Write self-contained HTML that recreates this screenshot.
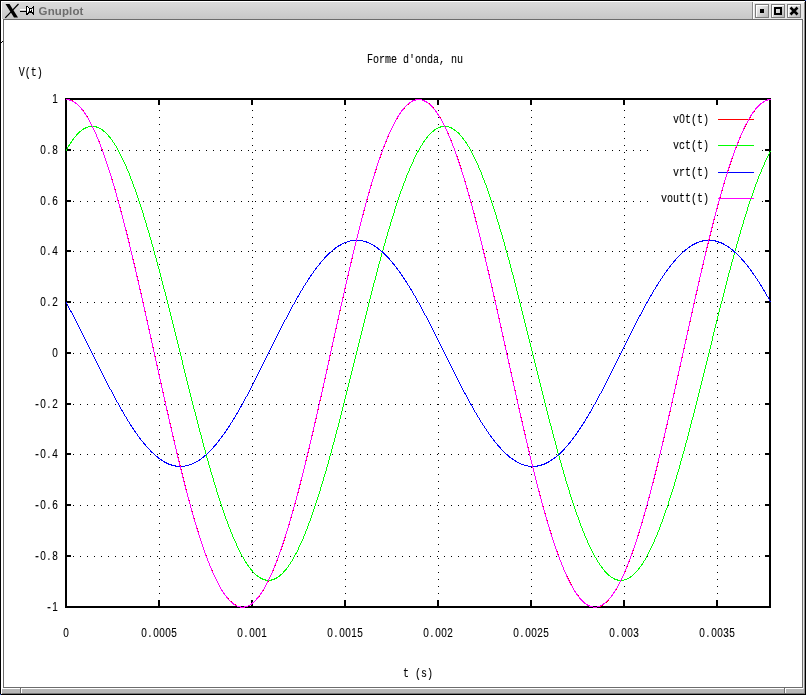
<!DOCTYPE html>
<html lang="it"><head><meta charset="utf-8"><title>Gnuplot</title>
<style>
html,body{margin:0;padding:0;background:#fff;width:806px;height:695px;overflow:hidden}
svg{display:block;position:absolute;left:0;top:0;will-change:transform}
.c{shape-rendering:crispEdges}
.m{font-family:"Liberation Mono","DejaVu Sans Mono",monospace;font-size:13px;fill:#000}
.d{font-family:"Liberation Sans","DejaVu Sans",sans-serif;font-size:13px}
.t{font-family:"Liberation Sans","DejaVu Sans",sans-serif;font-weight:bold;font-size:11.5px;letter-spacing:.12px;fill:#6d6d6d}
.ax{stroke:#000;stroke-width:2;fill:none}
.gr{stroke:#000;stroke-width:1;stroke-dasharray:1 6;fill:none}
.cv{fill:none;stroke-width:1}
</style></head><body>
<svg width="806" height="695" viewBox="0 0 806 695">
<defs><linearGradient id="tg" x1="0" y1="0" x2="0" y2="1"><stop offset="0" stop-color="#dbdbdb"/><stop offset="1" stop-color="#c8c8c8"/></linearGradient>
<linearGradient id="bg" x1="0" y1="0" x2="1" y2="1"><stop offset="0" stop-color="#f2f2f2"/><stop offset="1" stop-color="#b6b6b6"/></linearGradient></defs>
<g class="c">
<rect x="0" y="0" width="806" height="695" fill="#000"/>
<rect x="1" y="1" width="804" height="693" fill="#fff"/>
<rect x="803" y="20" width="1" height="669" fill="#e6e6e6"/>
<rect x="804" y="2" width="1" height="692" fill="#8a8a8a"/>
<rect x="2" y="693" width="803" height="1" fill="#7a7a7a"/>
<rect x="805" y="0" width="1" height="1" fill="#2a4fc0"/><rect x="0" y="694" width="1" height="1" fill="#2a4fc0"/>
<rect x="2" y="2" width="751" height="17" fill="url(#tg)"/>
<rect x="752" y="2" width="1" height="17" fill="#8a8a8a"/>
<rect x="753" y="2" width="51" height="17" fill="#e6e6e6"/>
<rect x="753" y="2" width="51" height="1" fill="#fff"/>
<rect x="753" y="2" width="1" height="17" fill="#fff"/>
<rect x="3" y="19" width="800" height="669" fill="#6c6c6c"/>
<rect x="4" y="20" width="798" height="667" fill="#fff"/>
<rect x="2" y="41" width="1" height="1" fill="#000"/><rect x="1" y="42" width="1" height="1" fill="#000"/>
<rect x="2" y="689" width="802" height="4" fill="#b8b8b8"/>
<rect x="20" y="688" width="1" height="6" fill="#6c6c6c"/>
<rect x="21" y="688" width="1" height="5" fill="#fff"/>
<rect x="784" y="688" width="1" height="6" fill="#6c6c6c"/>
<rect x="785" y="688" width="1" height="5" fill="#fff"/>
<rect x="755" y="4" width="14" height="14" fill="#7d7d7d"/>
<rect x="756" y="5" width="12" height="12" fill="#fff"/>
<rect x="757" y="6" width="11" height="11" fill="url(#bg)"/>
<rect x="771" y="4" width="14" height="14" fill="#7d7d7d"/>
<rect x="772" y="5" width="12" height="12" fill="#fff"/>
<rect x="773" y="6" width="11" height="11" fill="url(#bg)"/>
<rect x="787" y="4" width="14" height="14" fill="#7d7d7d"/>
<rect x="788" y="5" width="12" height="12" fill="#fff"/>
<rect x="789" y="6" width="11" height="11" fill="url(#bg)"/>
<rect x="760" y="9" width="4" height="4" fill="#000"/>
<rect x="775" y="8" width="6" height="6" fill="none" stroke="#000" stroke-width="2"/>
</g>
<path d="M790.5 7.5 L797.5 14.5 M797.5 7.5 L790.5 14.5" stroke="#000" stroke-width="2.6" fill="none"/>
<path d="M5.5 4 L9.5 4 L18 17.5 L14 17.5 Z" fill="#000"/>
<path d="M18.5 4 L5.3 17.8" stroke="#000" stroke-width="1.2" fill="none"/>
<g class="c"><rect x="20" y="9" width="6" height="1" fill="#fff"/><rect x="20" y="11" width="6" height="1" fill="#000"/><rect x="26" y="6" width="2" height="1" fill="#000"/><rect x="33" y="6" width="1" height="1" fill="#000"/><rect x="26" y="7" width="1" height="1" fill="#000"/><rect x="27" y="7" width="1" height="1" fill="#fff"/><rect x="28" y="7" width="1" height="1" fill="#000"/><rect x="32" y="7" width="2" height="1" fill="#000"/><rect x="26" y="8" width="1" height="1" fill="#000"/><rect x="27" y="8" width="2" height="1" fill="#fff"/><rect x="29" y="8" width="3" height="1" fill="#000"/><rect x="32" y="8" width="1" height="1" fill="#a8a8a8"/><rect x="33" y="8" width="1" height="1" fill="#000"/><rect x="26" y="9" width="1" height="1" fill="#000"/><rect x="27" y="9" width="2" height="1" fill="#fff"/><rect x="29" y="9" width="1" height="1" fill="#000"/><rect x="30" y="9" width="1" height="1" fill="#fff"/><rect x="31" y="9" width="1" height="1" fill="#a8a8a8"/><rect x="32" y="9" width="1" height="1" fill="#fff"/><rect x="33" y="9" width="1" height="1" fill="#000"/><rect x="26" y="10" width="1" height="1" fill="#000"/><rect x="27" y="10" width="2" height="1" fill="#fff"/><rect x="29" y="10" width="1" height="1" fill="#000"/><rect x="30" y="10" width="1" height="1" fill="#fff"/><rect x="31" y="10" width="1" height="1" fill="#000"/><rect x="32" y="10" width="1" height="1" fill="#fff"/><rect x="33" y="10" width="1" height="1" fill="#000"/><rect x="26" y="11" width="1" height="1" fill="#000"/><rect x="27" y="11" width="1" height="1" fill="#fff"/><rect x="28" y="11" width="1" height="1" fill="#a8a8a8"/><rect x="29" y="11" width="3" height="1" fill="#000"/><rect x="32" y="11" width="1" height="1" fill="#fff"/><rect x="33" y="11" width="1" height="1" fill="#000"/><rect x="26" y="12" width="1" height="1" fill="#000"/><rect x="27" y="12" width="1" height="1" fill="#fff"/><rect x="28" y="12" width="6" height="1" fill="#000"/><rect x="26" y="13" width="3" height="1" fill="#000"/><rect x="32" y="13" width="2" height="1" fill="#000"/><rect x="26" y="14" width="2" height="1" fill="#000"/><rect x="33" y="14" width="1" height="1" fill="#000"/></g>
<text class="t" x="38.6" y="15.3">Gnuplot</text>
<g class="c">
<line class="gr" x1="159.5" y1="608" x2="159.5" y2="99"/>
<line class="gr" x1="252.5" y1="608" x2="252.5" y2="99"/>
<line class="gr" x1="345.5" y1="608" x2="345.5" y2="99"/>
<line class="gr" x1="438.5" y1="608" x2="438.5" y2="99"/>
<line class="gr" x1="531.5" y1="608" x2="531.5" y2="99"/>
<line class="gr" x1="624.5" y1="608" x2="624.5" y2="99"/>
<line class="gr" x1="717.5" y1="608" x2="717.5" y2="99"/>
<line class="gr" x1="66" y1="150.5" x2="770" y2="150.5"/>
<line class="gr" x1="66" y1="201.5" x2="770" y2="201.5"/>
<line class="gr" x1="66" y1="251.5" x2="770" y2="251.5"/>
<line class="gr" x1="66" y1="302.5" x2="770" y2="302.5"/>
<line class="gr" x1="66" y1="353.5" x2="770" y2="353.5"/>
<line class="gr" x1="66" y1="404.5" x2="770" y2="404.5"/>
<line class="gr" x1="66" y1="454.5" x2="770" y2="454.5"/>
<line class="gr" x1="66" y1="505.5" x2="770" y2="505.5"/>
<line class="gr" x1="66" y1="556.5" x2="770" y2="556.5"/>
<rect x="648" y="100" width="114" height="112" fill="#fff"/>
<rect x="762" y="150" width="1" height="1" fill="#000"/>
<rect x="762" y="201" width="1" height="1" fill="#000"/>
<line class="ax" x1="159" y1="607" x2="159" y2="600"/>
<line class="ax" x1="159" y1="99" x2="159" y2="105"/>
<line class="ax" x1="252" y1="607" x2="252" y2="600"/>
<line class="ax" x1="252" y1="99" x2="252" y2="105"/>
<line class="ax" x1="345" y1="607" x2="345" y2="600"/>
<line class="ax" x1="345" y1="99" x2="345" y2="105"/>
<line class="ax" x1="438" y1="607" x2="438" y2="600"/>
<line class="ax" x1="438" y1="99" x2="438" y2="105"/>
<line class="ax" x1="531" y1="607" x2="531" y2="600"/>
<line class="ax" x1="531" y1="99" x2="531" y2="105"/>
<line class="ax" x1="624" y1="607" x2="624" y2="600"/>
<line class="ax" x1="624" y1="99" x2="624" y2="105"/>
<line class="ax" x1="717" y1="607" x2="717" y2="600"/>
<line class="ax" x1="717" y1="99" x2="717" y2="105"/>
<line class="ax" x1="66" y1="150" x2="71" y2="150"/>
<line class="ax" x1="770" y1="150" x2="765" y2="150"/>
<line class="ax" x1="66" y1="201" x2="71" y2="201"/>
<line class="ax" x1="770" y1="201" x2="765" y2="201"/>
<line class="ax" x1="66" y1="251" x2="71" y2="251"/>
<line class="ax" x1="770" y1="251" x2="765" y2="251"/>
<line class="ax" x1="66" y1="302" x2="71" y2="302"/>
<line class="ax" x1="770" y1="302" x2="765" y2="302"/>
<line class="ax" x1="66" y1="353" x2="71" y2="353"/>
<line class="ax" x1="770" y1="353" x2="765" y2="353"/>
<line class="ax" x1="66" y1="404" x2="71" y2="404"/>
<line class="ax" x1="770" y1="404" x2="765" y2="404"/>
<line class="ax" x1="66" y1="454" x2="71" y2="454"/>
<line class="ax" x1="770" y1="454" x2="765" y2="454"/>
<line class="ax" x1="66" y1="505" x2="71" y2="505"/>
<line class="ax" x1="770" y1="505" x2="765" y2="505"/>
<line class="ax" x1="66" y1="556" x2="71" y2="556"/>
<line class="ax" x1="770" y1="556" x2="765" y2="556"/>
<rect class="ax" x="66" y="99" width="704" height="508"/>
<line class="cv" stroke="#ff0000" x1="718" y1="119.5" x2="754" y2="119.5"/>
<g class="cv" stroke="#ff0000"><path transform="translate(.5 0)" d="M69 99v2M72 100v2M75 102v2M81 108v2M82 109v2M83 110v2M84 112v2M85 113v2M86 115v2M87 116v2M88 118v2M89 120v2M90 122v2M91 124v2M92 126v2M93 128v2M94 130v2M95 132v2M96 134v3M97 137v2M98 139v2M99 141v3M100 144v3M101 147v2M102 149v3M103 152v3M104 155v3M105 158v3M106 161v3M107 164v3M108 167v3M109 170v3M110 173v3M111 176v3M112 179v4M113 183v3M114 186v3M115 189v4M116 193v4M117 197v3M118 200v4M119 204v3M120 207v4M121 211v4M122 215v4M123 219v4M124 223v4M125 227v3M126 230v4M127 234v4M128 238v4M129 242v5M130 247v4M131 251v4M132 255v4M133 259v4M134 263v4M135 267v5M136 272v4M137 276v4M138 280v5M139 285v4M140 289v4M141 293v5M142 298v4M143 302v5M144 307v4M145 311v5M146 316v4M147 320v5M148 325v4M149 329v5M150 334v4M151 338v5M152 343v4M153 347v5M154 352v4M155 356v5M156 361v4M157 365v5M158 370v4M159 374v5M160 379v4M161 383v5M162 388v4M163 392v5M164 397v4M165 401v5M166 406v4M167 410v4M168 414v5M169 419v4M170 423v4M171 427v5M172 432v4M173 436v4M174 440v5M175 445v4M176 449v4M177 453v4M178 457v4M179 461v4M180 465v4M181 469v4M182 473v4M183 477v4M184 481v4M185 485v4M186 489v4M187 493v4M188 497v3M189 500v4M190 504v4M191 508v3M192 511v4M193 515v3M194 518v4M195 522v3M196 525v3M197 528v3M198 531v4M199 535v3M200 538v3M201 541v3M202 544v3M203 547v3M204 550v3M205 553v2M206 555v3M207 558v3M208 561v2M209 563v3M210 566v2M211 568v2M212 570v3M213 573v2M214 575v2M215 577v2M216 579v2M217 581v2M218 583v2M219 585v2M220 587v2M222 590v2M224 593v2M226 596v2M227 597v2M228 598v2M231 601v2M232 602v2M233 603v2M235 604v2M240 606v2M244 606v2M251 603v2M252 602v2M257 597v2M258 596v2M259 595v2M260 593v2M261 592v2M262 590v2M263 589v2M264 587v2M265 585v2M266 583v2M267 581v2M268 579v3M269 577v2M270 575v2M271 573v2M272 571v2M273 568v3M274 566v2M275 563v3M276 561v2M277 558v3M278 555v3M279 552v3M280 550v2M281 547v3M282 544v3M283 541v3M284 538v3M285 534v4M286 531v3M287 528v3M288 525v3M289 521v4M290 518v3M291 514v4M292 511v3M293 507v4M294 504v3M295 500v4M296 496v4M297 493v3M298 489v4M299 485v4M300 481v4M301 477v4M302 473v4M303 469v4M304 465v4M305 461v4M306 457v4M307 453v4M308 449v4M309 444v5M310 440v4M311 436v4M312 432v4M313 427v5M314 423v4M315 419v4M316 414v5M317 410v4M318 405v5M319 401v4M320 397v4M321 392v5M322 388v4M323 383v5M324 379v4M325 374v5M326 370v4M327 365v5M328 361v4M329 356v5M330 351v5M331 347v4M332 342v5M333 338v4M334 333v5M335 329v4M336 324v5M337 320v4M338 315v5M339 311v4M340 306v5M341 302v4M342 298v4M343 293v5M344 289v4M345 284v5M346 280v4M347 276v4M348 271v5M349 267v4M350 263v4M351 259v4M352 254v5M353 250v4M354 246v4M355 242v4M356 238v4M357 234v4M358 230v4M359 226v4M360 222v4M361 218v4M362 215v3M363 211v4M364 207v4M365 203v4M366 200v3M367 196v4M368 193v3M369 189v4M370 186v3M371 182v4M372 179v3M373 176v3M374 173v3M375 170v3M376 166v4M377 163v3M378 160v3M379 158v2M380 155v3M381 152v3M382 149v3M383 147v2M384 144v3M385 142v2M386 139v3M387 137v2M388 134v3M389 132v2M390 130v2M391 128v2M392 126v2M393 124v2M394 122v2M395 120v2M396 118v2M397 117v2M398 115v2M400 112v2M402 109v2M403 108v2M404 107v2M408 103v2M409 102v2M415 99v2M426 101v2M429 103v2M430 104v2M431 105v2M432 106v2M433 107v2M435 110v2M436 111v2M438 114v2M439 116v2M440 117v2M441 119v2M442 121v2M443 123v2M444 125v2M445 127v2M446 129v2M447 131v2M448 133v3M449 136v2M450 138v2M451 140v3M452 143v3M453 146v2M454 148v3M455 151v3M456 154v2M457 156v3M458 159v3M459 162v3M460 165v3M461 168v4M462 172v3M463 175v3M464 178v3M465 181v4M466 185v3M467 188v4M468 192v3M469 195v4M470 199v3M471 202v4M472 206v4M473 210v3M474 213v4M475 217v4M476 221v4M477 225v4M478 229v4M479 233v4M480 237v4M481 241v4M482 245v4M483 249v4M484 253v4M485 257v5M486 262v4M487 266v4M488 270v4M489 274v5M490 279v4M491 283v4M492 287v5M493 292v4M494 296v4M495 300v5M496 305v4M497 309v5M498 314v4M499 318v5M500 323v4M501 327v5M502 332v4M503 336v5M504 341v4M505 345v5M506 350v4M507 354v5M508 359v4M509 363v5M510 368v4M511 372v5M512 377v4M513 381v5M514 386v4M515 390v5M516 395v4M517 399v5M518 404v4M519 408v5M520 413v4M521 417v4M522 421v5M523 426v4M524 430v4M525 434v5M526 439v4M527 443v4M528 447v4M529 451v5M530 456v4M531 460v4M532 464v4M533 468v4M534 472v4M535 476v4M536 480v4M537 484v4M538 488v3M539 491v4M540 495v4M541 499v4M542 503v3M543 506v4M544 510v3M545 513v4M546 517v3M547 520v4M548 524v3M549 527v3M550 530v3M551 533v4M552 537v3M553 540v3M554 543v3M555 546v3M556 549v2M557 551v3M558 554v3M559 557v3M560 560v2M561 562v3M562 565v2M563 567v3M564 570v2M565 572v2M566 574v2M567 576v2M568 578v2M569 580v2M570 582v2M571 584v2M572 586v2M573 588v2M575 591v2M577 594v2M578 595v2M580 598v2M581 599v2M582 600v2M583 601v2M587 604v2M589 605v2M600 605v2M602 604v2M606 601v2M607 600v2M608 599v2M611 595v2M612 594v2M614 591v2M615 589v2M616 588v2M617 586v2M618 584v2M619 582v2M620 580v2M621 578v2M622 576v2M623 574v2M624 572v2M625 569v3M626 567v2M627 564v3M628 562v2M629 559v3M630 556v3M631 554v2M632 551v3M633 548v3M634 545v3M635 542v3M636 539v3M637 536v3M638 533v3M639 529v4M640 526v3M641 523v3M642 519v4M643 516v3M644 512v4M645 509v3M646 505v4M647 501v4M648 498v3M649 494v4M650 490v4M651 486v4M652 483v3M653 479v4M654 475v4M655 471v4M656 467v4M657 463v4M658 458v5M659 454v4M660 450v4M661 446v4M662 442v4M663 438v4M664 433v5M665 429v4M666 425v4M667 420v5M668 416v4M669 412v4M670 407v5M671 403v4M672 398v5M673 394v4M674 389v5M675 385v4M676 380v5M677 376v4M678 371v5M679 367v4M680 362v5M681 358v4M682 353v5M683 349v4M684 344v5M685 340v4M686 335v5M687 331v4M688 326v5M689 322v4M690 317v5M691 313v4M692 308v5M693 304v4M694 299v5M695 295v4M696 291v4M697 286v5M698 282v4M699 277v5M700 273v4M701 269v4M702 265v4M703 260v5M704 256v4M705 252v4M706 248v4M707 244v4M708 240v4M709 236v4M710 232v4M711 228v4M712 224v4M713 220v4M714 216v4M715 212v4M716 209v3M717 205v4M718 201v4M719 198v3M720 194v4M721 191v3M722 187v4M723 184v3M724 180v4M725 177v3M726 174v3M727 171v3M728 168v3M729 165v3M730 162v3M731 159v3M732 156v3M733 153v3M734 150v3M735 148v2M736 145v3M737 143v2M738 140v3M739 138v2M740 135v3M741 133v2M742 131v2M743 129v2M744 127v2M745 125v2M746 123v2M747 121v2M748 119v2M749 117v2M750 116v2M751 114v2M753 111v2M754 110v2M756 107v2M757 106v2M758 105v2M759 104v2M760 103v2M763 101v2"/><path transform="translate(0 .5)" d="M66 99h3M70 100h2M73 101h1M74 102h1M76 103h1M77 104h1M78 105h1M79 106h1M80 107h1M221 589h1M223 592h1M225 595h1M229 600h1M230 601h1M234 604h1M236 605h1M237 606h3M241 607h3M245 606h3M248 605h2M250 604h1M253 602h1M254 601h1M255 600h1M256 599h1M399 114h1M401 111h1M405 106h1M406 105h1M407 104h1M410 102h1M411 101h2M413 100h2M416 99h6M422 100h3M425 101h1M427 102h1M428 103h1M434 109h1M437 113h1M574 590h1M576 593h1M579 597h1M584 602h1M585 603h1M586 604h1M588 605h1M590 606h3M593 607h4M597 606h3M601 605h1M603 604h1M604 603h1M605 602h1M609 598h1M610 597h1M613 593h1M752 113h1M755 109h1M761 103h1M762 102h1M764 101h1M765 100h3M768 99h3"/></g>
<line class="cv" stroke="#00ff00" x1="718" y1="145.5" x2="754" y2="145.5"/>
<g class="cv" stroke="#00ff00"><path transform="translate(.5 0)" d="M66 149v2M67 147v2M68 145v2M69 144v2M70 142v2M71 141v2M72 139v2M73 138v2M76 134v2M77 133v2M78 132v2M79 131v2M83 128v2M85 127v2M96 126v2M102 129v2M103 130v2M108 135v2M109 136v2M110 137v2M112 140v2M114 143v2M116 146v2M117 148v2M118 150v2M119 152v2M120 154v2M121 156v2M122 158v2M123 160v2M124 162v2M125 164v2M126 166v3M127 169v2M128 171v2M129 173v3M130 176v3M131 179v2M132 181v3M133 184v3M134 187v2M135 189v3M136 192v3M137 195v3M138 198v3M139 201v3M140 204v3M141 207v3M142 210v3M143 213v4M144 217v3M145 220v3M146 223v4M147 227v3M148 230v3M149 233v4M150 237v3M151 240v4M152 244v3M153 247v4M154 251v4M155 255v3M156 258v4M157 262v4M158 266v3M159 269v4M160 273v4M161 277v4M162 281v4M163 285v4M164 289v3M165 292v4M166 296v4M167 300v4M168 304v4M169 308v4M170 312v4M171 316v4M172 320v4M173 324v4M174 328v4M175 332v4M176 336v4M177 340v4M178 344v4M179 348v4M180 352v4M181 356v4M182 360v5M183 365v4M184 369v4M185 373v4M186 377v4M187 381v4M188 385v4M189 389v4M190 393v4M191 397v4M192 401v4M193 405v4M194 409v3M195 412v4M196 416v4M197 420v4M198 424v4M199 428v4M200 432v3M201 435v4M202 439v4M203 443v4M204 447v3M205 450v4M206 454v4M207 458v3M208 461v4M209 465v3M210 468v4M211 472v3M212 475v3M213 478v4M214 482v3M215 485v3M216 488v4M217 492v3M218 495v3M219 498v3M220 501v3M221 504v3M222 507v3M223 510v3M224 513v3M225 516v3M226 519v2M227 521v3M228 524v3M229 527v2M230 529v3M231 532v2M232 534v3M233 537v2M234 539v2M235 541v2M236 543v3M237 546v2M238 548v2M239 550v2M240 552v2M241 554v2M243 557v2M244 559v2M245 561v2M246 562v2M247 564v2M248 565v2M250 568v2M251 569v2M252 570v2M257 575v2M260 577v2M262 578v2M265 579v2M271 579v2M274 578v2M276 577v2M279 575v2M280 574v2M283 571v2M284 570v2M285 569v2M286 568v2M288 565v2M290 562v2M292 559v2M293 557v2M294 555v2M295 553v2M296 552v2M297 550v2M298 547v3M299 545v2M300 543v2M301 541v2M302 539v2M303 536v3M304 534v2M305 531v3M306 529v2M307 526v3M308 523v3M309 521v2M310 518v3M311 515v3M312 512v3M313 509v3M314 506v3M315 503v3M316 500v3M317 497v3M318 494v3M319 491v3M320 487v4M321 484v3M322 481v3M323 477v4M324 474v3M325 471v3M326 467v4M327 464v3M328 460v4M329 456v4M330 453v3M331 449v4M332 445v4M333 442v3M334 438v4M335 434v4M336 430v4M337 427v3M338 423v4M339 419v4M340 415v4M341 411v4M342 407v4M343 403v4M344 399v4M345 395v4M346 391v4M347 387v4M348 383v4M349 379v4M350 375v4M351 371v4M352 367v4M353 363v4M354 359v4M355 355v4M356 351v4M357 347v4M358 343v4M359 339v4M360 335v4M361 331v4M362 327v4M363 323v4M364 319v4M365 315v4M366 311v4M367 307v4M368 303v4M369 299v4M370 295v4M371 291v4M372 287v4M373 283v4M374 280v3M375 276v4M376 272v4M377 268v4M378 264v4M379 261v3M380 257v4M381 253v4M382 250v3M383 246v4M384 243v3M385 239v4M386 236v3M387 232v4M388 229v3M389 226v3M390 222v4M391 219v3M392 216v3M393 213v3M394 209v4M395 206v3M396 203v3M397 200v3M398 197v3M399 194v3M400 191v3M401 189v2M402 186v3M403 183v3M404 181v2M405 178v3M406 175v3M407 173v2M408 171v2M409 168v3M410 166v2M411 164v2M412 162v2M413 159v3M414 157v2M415 155v2M416 153v2M417 151v2M418 150v2M419 148v2M420 146v2M422 143v2M423 141v2M424 140v2M426 137v2M427 136v2M433 130v2M434 129v2M440 126v2M451 127v2M454 129v2M458 132v2M459 133v2M462 137v2M463 138v2M465 141v2M466 142v2M467 144v2M469 147v2M470 149v2M471 151v2M472 153v2M473 155v2M474 157v2M475 159v2M476 161v2M477 163v2M478 165v3M479 168v2M480 170v2M481 172v3M482 175v3M483 178v2M484 180v3M485 183v2M486 185v3M487 188v3M488 191v3M489 194v3M490 197v3M491 200v3M492 203v3M493 206v3M494 209v3M495 212v3M496 215v4M497 219v3M498 222v3M499 225v4M500 229v3M501 232v3M502 235v4M503 239v3M504 242v4M505 246v4M506 250v3M507 253v4M508 257v3M509 260v4M510 264v4M511 268v4M512 272v3M513 275v4M514 279v4M515 283v4M516 287v4M517 291v4M518 295v4M519 299v4M520 303v4M521 307v4M522 311v4M523 315v4M524 319v4M525 323v4M526 327v4M527 331v4M528 335v4M529 339v4M530 343v4M531 347v4M532 351v4M533 355v4M534 359v4M535 363v4M536 367v4M537 371v4M538 375v4M539 379v4M540 383v4M541 387v4M542 391v4M543 395v4M544 399v4M545 403v4M546 407v4M547 411v4M548 415v4M549 419v4M550 423v3M551 426v4M552 430v4M553 434v4M554 438v3M555 441v4M556 445v4M557 449v4M558 453v3M559 456v4M560 460v3M561 463v4M562 467v3M563 470v4M564 474v3M565 477v4M566 481v3M567 484v3M568 487v3M569 490v4M570 494v3M571 497v3M572 500v3M573 503v3M574 506v3M575 509v3M576 512v3M577 515v2M578 517v3M579 520v3M580 523v3M581 526v2M582 528v3M583 531v2M584 533v3M585 536v2M586 538v2M587 540v3M588 543v2M589 545v2M590 547v2M591 549v2M592 551v2M593 553v2M594 555v2M596 558v2M597 560v2M599 563v2M601 566v2M602 567v2M604 570v2M605 571v2M606 572v2M607 573v2M608 574v2M614 578v2M617 579v2M630 576v2M638 568v2M639 567v2M641 564v2M642 563v2M643 561v2M645 558v2M646 556v2M647 554v2M648 552v2M649 550v2M650 548v2M651 546v2M652 544v2M653 542v2M654 539v3M655 537v2M656 535v2M657 532v3M658 530v2M659 527v3M660 524v3M661 522v2M662 519v3M663 516v3M664 513v3M665 510v3M666 508v2M667 505v3M668 501v4M669 498v3M670 495v3M671 492v3M672 489v3M673 486v3M674 482v4M675 479v3M676 475v4M677 472v3M678 469v3M679 465v4M680 461v4M681 458v3M682 454v4M683 451v3M684 447v4M685 443v4M686 440v3M687 436v4M688 432v4M689 428v4M690 424v4M691 420v4M692 417v3M693 413v4M694 409v4M695 405v4M696 401v4M697 397v4M698 393v4M699 389v4M700 385v4M701 381v4M702 377v4M703 373v4M704 369v4M705 365v4M706 361v4M707 357v4M708 353v4M709 349v4M710 345v4M711 341v4M712 336v5M713 332v4M714 328v4M715 324v4M716 320v4M717 316v4M718 312v4M719 308v4M720 304v4M721 301v3M722 297v4M723 293v4M724 289v4M725 285v4M726 281v4M727 277v4M728 273v4M729 270v3M730 266v4M731 262v4M732 259v3M733 255v4M734 251v4M735 248v3M736 244v4M737 241v3M738 237v4M739 234v3M740 230v4M741 227v3M742 224v3M743 220v4M744 217v3M745 214v3M746 211v3M747 207v4M748 204v3M749 201v3M750 198v3M751 196v2M752 193v3M753 190v3M754 187v3M755 184v3M756 182v2M757 179v3M758 176v3M759 174v2M760 172v2M761 169v3M762 167v2M763 165v2M764 162v3M765 160v2M766 158v2M767 156v2M768 154v2M769 152v2"/><path transform="translate(0 .5)" d="M74 137h1M75 136h1M80 131h1M81 130h1M82 129h1M84 128h1M86 127h2M88 126h8M97 127h2M99 128h2M101 129h1M104 131h1M105 132h1M106 133h1M107 134h1M111 139h1M113 142h1M115 145h1M242 556h1M249 567h1M253 572h1M254 573h1M255 574h1M256 575h1M258 576h1M259 577h1M261 578h1M263 579h2M266 580h5M272 579h2M275 578h1M277 577h1M278 576h1M281 574h1M282 573h1M287 567h1M289 564h1M291 561h1M421 145h1M425 139h1M428 135h1M429 134h1M430 133h1M431 132h1M432 131h1M435 129h1M436 128h2M438 127h2M441 126h8M449 127h2M452 128h1M453 129h1M455 130h1M456 131h1M457 132h1M460 135h1M461 136h1M464 140h1M468 146h1M595 557h1M598 562h1M600 565h1M603 569h1M609 575h1M610 576h1M611 577h2M613 578h1M615 579h2M618 580h6M624 579h3M627 578h2M629 577h1M631 576h1M632 575h1M633 574h1M634 573h1M635 572h1M636 571h1M637 570h1M640 566h1M644 560h1M770 151h1"/></g>
<line class="cv" stroke="#0000ff" x1="718" y1="172.5" x2="754" y2="172.5"/>
<g class="cv" stroke="#0000ff"><path transform="translate(.5 0)" d="M66 302v2M67 304v2M68 306v2M69 308v2M70 310v2M71 311v2M72 313v2M73 315v2M74 317v2M75 319v2M76 321v2M77 323v2M78 325v2M79 327v2M80 329v2M81 331v2M82 333v2M83 335v2M84 337v2M85 339v2M86 341v2M87 343v2M88 345v2M89 347v2M90 349v2M91 351v2M92 353v2M93 355v2M94 357v2M95 359v2M96 361v2M97 363v2M98 365v2M99 367v2M100 369v2M101 371v2M102 373v2M103 375v2M104 377v2M105 379v2M106 381v2M107 383v2M108 385v2M109 387v2M111 390v2M112 392v2M113 394v2M114 396v2M115 398v2M116 400v2M118 403v2M119 405v2M120 407v2M121 409v2M122 410v2M123 412v2M124 414v2M126 417v2M127 419v2M129 422v2M130 424v2M131 425v2M132 427v2M133 428v2M134 430v2M135 431v2M137 434v2M139 437v2M140 438v2M143 442v2M144 443v2M145 444v2M150 450v2M151 451v2M157 456v2M158 457v2M161 459v2M164 461v2M166 462v2M168 463v2M171 464v2M175 465v2M199 459v2M203 456v2M204 455v2M213 446v2M214 445v2M215 444v2M216 443v2M218 440v2M219 439v2M221 436v2M222 435v2M224 432v2M225 431v2M226 429v2M227 428v2M228 426v2M229 425v2M230 423v2M232 420v2M233 418v2M234 417v2M235 415v2M236 413v2M237 412v2M238 410v2M239 408v2M240 406v2M241 405v2M242 403v2M243 401v2M244 399v2M245 397v2M247 394v2M248 392v2M249 390v2M250 388v2M251 386v2M252 384v2M253 382v2M254 380v2M255 378v2M256 376v2M257 374v2M258 372v2M259 370v2M260 368v2M261 366v2M262 364v2M263 362v2M264 360v2M265 358v2M266 356v2M267 354v2M268 352v2M269 350v2M270 348v2M271 346v2M272 344v2M273 342v2M274 340v2M275 338v2M276 336v2M277 334v2M278 332v2M279 330v2M280 328v2M281 326v2M282 324v2M283 322v2M284 320v2M286 317v2M287 315v2M288 313v2M289 311v2M290 309v2M291 307v2M292 305v2M294 302v2M295 300v2M296 298v2M297 296v2M298 295v2M299 293v2M300 291v2M302 288v2M303 286v2M305 283v2M307 280v2M308 278v2M309 277v2M310 275v2M311 274v2M313 271v2M315 268v2M316 267v2M319 263v2M320 262v2M324 257v2M325 256v2M326 255v2M327 254v2M328 253v2M329 252v2M334 248v2M335 247v2M338 245v2M340 244v2M366 241v2M374 245v2M377 247v2M378 248v2M382 251v2M383 252v2M384 253v2M385 254v2M386 255v2M387 256v2M388 257v2M389 258v2M392 262v2M393 263v2M394 264v2M396 267v2M397 268v2M399 271v2M400 272v2M401 274v2M402 275v2M403 277v2M404 278v2M405 280v2M406 281v2M407 283v2M409 286v2M410 288v2M411 289v2M412 291v2M413 293v2M415 296v2M416 298v2M417 300v2M419 303v2M420 305v2M421 307v2M422 309v2M423 311v2M424 313v2M426 316v2M427 318v2M428 320v2M429 322v2M430 324v2M431 326v2M432 328v2M433 330v2M434 332v2M435 334v2M436 336v2M437 338v2M438 340v2M439 342v2M440 344v2M441 346v2M442 348v2M443 350v2M444 352v2M445 354v2M446 356v2M447 358v2M448 360v2M449 362v2M450 364v2M451 366v2M452 368v2M453 370v2M454 372v2M455 374v2M456 376v2M457 378v2M458 380v2M459 382v2M460 384v2M461 386v2M462 388v2M463 390v2M464 392v2M465 393v2M466 395v2M467 397v2M468 399v2M469 401v2M470 403v2M471 404v2M472 406v2M473 408v2M474 410v2M476 413v2M477 415v2M479 418v2M480 420v2M482 423v2M484 426v2M486 429v2M488 432v2M490 435v2M491 436v2M493 439v2M494 440v2M497 444v2M498 445v2M499 446v2M500 447v2M507 454v2M508 455v2M509 456v2M512 458v2M515 460v2M537 465v2M541 464v2M544 463v2M546 462v2M548 461v2M551 459v2M554 457v2M559 453v2M560 452v2M561 451v2M562 450v2M563 449v2M564 448v2M568 443v2M569 442v2M570 441v2M572 438v2M573 437v2M575 434v2M576 433v2M577 431v2M578 430v2M579 428v2M580 427v2M581 425v2M582 424v2M583 422v2M584 421v2M585 419v2M586 417v2M587 416v2M588 414v2M589 412v2M590 411v2M591 409v2M592 407v2M593 405v2M595 402v2M596 400v2M597 398v2M598 396v2M599 394v2M601 391v2M602 389v2M603 387v2M604 385v2M605 383v2M606 381v2M607 379v2M608 377v2M609 375v2M610 373v2M611 371v2M612 369v2M613 367v2M614 365v2M615 363v2M616 361v2M617 359v2M618 357v2M619 355v2M620 353v2M621 351v2M622 349v2M623 347v2M624 345v2M625 343v2M626 341v2M627 339v2M628 337v2M629 335v2M630 333v2M631 331v2M632 329v2M633 327v2M634 325v2M635 323v2M636 321v2M637 319v2M638 317v2M639 315v2M640 314v2M641 312v2M642 310v2M643 308v2M644 306v2M645 304v2M646 302v2M647 301v2M648 299v2M649 297v2M650 295v2M651 294v2M652 292v2M653 290v2M655 287v2M656 285v2M657 284v2M658 282v2M660 279v2M662 276v2M664 273v2M666 270v2M667 269v2M669 266v2M670 265v2M673 261v2M674 260v2M675 259v2M684 250v2M685 249v2M689 246v2M692 244v2M694 243v2M696 242v2M702 240v2M715 240v2M718 241v2M721 242v2M723 243v2M728 246v2M732 249v2M733 250v2M734 251v2M741 258v2M742 259v2M743 260v2M744 261v2M747 265v2M748 266v2M750 269v2M751 270v2M752 272v2M753 273v2M755 276v2M757 279v2M759 282v2M760 284v2M761 285v2M762 287v2M763 289v2M764 290v2M765 292v2M766 294v2M768 297v2M769 299v2"/><path transform="translate(0 .5)" d="M110 389h1M117 402h1M125 416h1M128 421h1M136 433h1M138 436h1M141 440h1M142 441h1M146 446h1M147 447h1M148 448h1M149 449h1M152 452h1M153 453h1M154 454h1M155 455h1M156 456h1M159 458h1M160 459h1M162 460h1M163 461h1M165 462h1M167 463h1M169 464h2M172 465h3M176 466h9M185 465h4M189 464h3M192 463h2M194 462h2M196 461h2M198 460h1M200 459h1M201 458h1M202 457h1M205 455h1M206 454h1M207 453h1M208 452h1M209 451h1M210 450h1M211 449h1M212 448h1M217 442h1M220 438h1M223 434h1M231 422h1M246 396h1M285 319h1M293 304h1M301 290h1M304 285h1M306 282h1M312 273h1M314 270h1M317 266h1M318 265h1M321 261h1M322 260h1M323 259h1M330 252h1M331 251h1M332 250h1M333 249h1M336 247h1M337 246h1M339 245h1M341 244h1M342 243h2M344 242h3M347 241h3M350 240h13M363 241h3M367 242h2M369 243h2M371 244h2M373 245h1M375 246h1M376 247h1M379 249h1M380 250h1M381 251h1M390 260h1M391 261h1M395 266h1M398 270h1M408 285h1M414 295h1M418 302h1M425 315h1M475 412h1M478 417h1M481 422h1M483 425h1M485 428h1M487 431h1M489 434h1M492 438h1M495 442h1M496 443h1M501 449h1M502 450h1M503 451h1M504 452h1M505 453h1M506 454h1M510 457h1M511 458h1M513 459h1M514 460h1M516 461h1M517 462h2M519 463h2M521 464h3M524 465h4M528 466h9M538 465h3M542 464h2M545 463h1M547 462h1M549 461h1M550 460h1M552 459h1M553 458h1M555 457h1M556 456h1M557 455h1M558 454h1M565 447h1M566 446h1M567 445h1M571 440h1M574 436h1M594 404h1M600 393h1M654 289h1M659 281h1M661 278h1M663 275h1M665 272h1M668 268h1M671 264h1M672 263h1M676 258h1M677 257h1M678 256h1M679 255h1M680 254h1M681 253h1M682 252h1M683 251h1M686 249h1M687 248h1M688 247h1M690 246h1M691 245h1M693 244h1M695 243h1M697 242h2M699 241h3M703 240h12M716 241h2M719 242h2M722 243h1M724 244h1M725 245h2M727 246h1M729 247h1M730 248h1M731 249h1M735 252h1M736 253h1M737 254h1M738 255h1M739 256h1M740 257h1M745 263h1M746 264h1M749 268h1M754 275h1M756 278h1M758 281h1M767 296h1M770 301h1"/></g>
<line class="cv" stroke="#ff00ff" x1="718" y1="198.5" x2="754" y2="198.5"/>
<g class="cv" stroke="#ff00ff"><path transform="translate(.5 0)" d="M69 99v2M75 102v2M81 108v2M82 109v2M84 112v2M85 113v2M86 115v2M88 118v2M89 120v2M90 122v2M91 124v2M92 126v2M93 128v2M94 130v2M95 132v2M96 134v3M97 137v2M98 139v3M99 142v2M100 144v3M101 147v3M102 150v2M103 152v3M104 155v3M105 158v3M106 161v3M107 164v3M108 167v3M109 170v3M110 173v3M111 176v4M112 180v3M113 183v3M114 186v4M115 190v3M116 193v4M117 197v4M118 201v3M119 204v4M120 208v4M121 212v3M122 215v4M123 219v4M124 223v4M125 227v4M126 231v4M127 235v4M128 239v4M129 243v4M130 247v4M131 251v4M132 255v5M133 260v4M134 264v4M135 268v4M136 272v5M137 277v4M138 281v4M139 285v5M140 290v4M141 294v4M142 298v5M143 303v4M144 307v5M145 312v4M146 316v5M147 321v4M148 325v5M149 330v4M150 334v5M151 339v4M152 343v5M153 348v4M154 352v5M155 357v4M156 361v5M157 366v4M158 370v5M159 375v4M160 379v5M161 384v4M162 388v5M163 393v4M164 397v5M165 402v4M166 406v5M167 411v4M168 415v4M169 419v5M170 424v4M171 428v4M172 432v5M173 437v4M174 441v4M175 445v4M176 449v5M177 454v4M178 458v4M179 462v4M180 466v4M181 470v4M182 474v4M183 478v4M184 482v4M185 486v4M186 490v3M187 493v4M188 497v4M189 501v3M190 504v4M191 508v4M192 512v3M193 515v4M194 519v3M195 522v3M196 525v4M197 529v3M198 532v3M199 535v3M200 538v3M201 541v3M202 544v3M203 547v3M204 550v3M205 553v3M206 556v2M207 558v3M208 561v2M209 563v3M210 566v2M211 568v3M212 571v2M213 573v2M214 575v2M215 577v2M216 579v2M217 581v2M218 583v2M219 585v2M220 587v2M221 589v2M222 590v2M223 592v2M224 593v2M226 596v2M227 597v2M232 602v2M233 603v2M240 606v2M244 606v2M251 603v2M252 602v2M256 598v2M257 597v2M258 596v2M260 593v2M261 592v2M262 590v2M264 587v2M265 585v2M266 583v2M267 581v2M268 579v2M269 577v2M270 575v2M271 573v2M272 570v3M273 568v2M274 565v3M275 563v2M276 560v3M277 558v2M278 555v3M279 552v3M280 549v3M281 546v3M282 543v3M283 540v3M284 537v3M285 534v3M286 531v3M287 528v3M288 524v4M289 521v3M290 517v4M291 514v3M292 510v4M293 507v3M294 503v4M295 500v3M296 496v4M297 492v4M298 488v4M299 484v4M300 480v4M301 477v3M302 473v4M303 469v4M304 465v4M305 460v5M306 456v4M307 452v4M308 448v4M309 444v4M310 440v4M311 435v5M312 431v4M313 427v4M314 422v5M315 418v4M316 414v4M317 409v5M318 405v4M319 400v5M320 396v4M321 392v4M322 387v5M323 383v4M324 378v5M325 374v4M326 369v5M327 365v4M328 360v5M329 355v5M330 351v4M331 346v5M332 342v4M333 337v5M334 333v4M335 328v5M336 324v4M337 319v5M338 315v4M339 310v5M340 306v4M341 302v4M342 297v5M343 293v4M344 288v5M345 284v4M346 280v4M347 275v5M348 271v4M349 267v4M350 262v5M351 258v4M352 254v4M353 250v4M354 246v4M355 242v4M356 238v4M357 234v4M358 230v4M359 226v4M360 222v4M361 218v4M362 214v4M363 210v4M364 207v3M365 203v4M366 199v4M367 196v3M368 192v4M369 189v3M370 185v4M371 182v3M372 179v3M373 176v3M374 172v4M375 169v3M376 166v3M377 163v3M378 160v3M379 157v3M380 154v3M381 152v2M382 149v3M383 146v3M384 144v2M385 141v3M386 139v2M387 136v3M388 134v2M389 132v2M390 130v2M391 128v2M392 126v2M393 124v2M394 122v2M395 120v2M396 118v2M397 116v2M398 115v2M399 113v2M400 112v2M401 110v2M402 109v2M403 108v2M409 102v2M412 100v2M415 99v2M424 100v2M426 101v2M430 104v2M431 105v2M432 106v2M435 110v2M436 111v2M437 113v2M438 114v2M439 116v2M441 119v2M442 121v2M443 123v2M444 125v2M445 127v2M446 129v2M447 131v3M448 134v2M449 136v2M450 138v3M451 141v2M452 143v3M453 146v2M454 148v3M455 151v3M456 154v3M457 157v3M458 160v3M459 163v3M460 166v3M461 169v3M462 172v3M463 175v3M464 178v4M465 182v3M466 185v4M467 189v3M468 192v4M469 196v3M470 199v4M471 203v3M472 206v4M473 210v4M474 214v4M475 218v4M476 222v3M477 225v4M478 229v4M479 233v4M480 237v4M481 241v4M482 245v5M483 250v4M484 254v4M485 258v4M486 262v4M487 266v5M488 271v4M489 275v4M490 279v4M491 283v5M492 288v4M493 292v5M494 297v4M495 301v4M496 305v5M497 310v4M498 314v5M499 319v4M500 323v5M501 328v4M502 332v5M503 337v4M504 341v5M505 346v4M506 350v5M507 355v4M508 359v5M509 364v4M510 368v5M511 373v4M512 377v5M513 382v4M514 386v5M515 391v4M516 395v5M517 400v4M518 404v5M519 409v4M520 413v5M521 418v4M522 422v4M523 426v5M524 431v4M525 435v4M526 439v4M527 443v5M528 448v4M529 452v4M530 456v4M531 460v4M532 464v4M533 468v4M534 472v4M535 476v4M536 480v4M537 484v4M538 488v4M539 492v4M540 496v3M541 499v4M542 503v4M543 507v3M544 510v4M545 514v3M546 517v4M547 521v3M548 524v3M549 527v4M550 531v3M551 534v3M552 537v3M553 540v3M554 543v3M555 546v3M556 549v3M557 552v3M558 555v2M559 557v3M560 560v2M561 562v3M562 565v2M563 567v3M564 570v2M565 572v2M566 574v3M567 577v2M568 579v2M569 581v2M570 583v2M572 586v2M573 588v2M574 590v2M575 591v2M576 593v2M577 594v2M579 597v2M580 598v2M581 599v2M582 600v2M583 601v2M584 602v2M587 604v2M589 605v2M603 603v2M611 595v2M612 594v2M613 592v2M614 591v2M615 589v2M617 586v2M618 584v2M619 582v2M620 580v2M621 578v2M622 576v2M623 574v2M624 571v3M625 569v2M626 566v3M627 564v2M628 561v3M629 559v2M630 556v3M631 553v3M632 550v3M633 548v2M634 545v3M635 542v3M636 539v3M637 535v4M638 532v3M639 529v3M640 526v3M641 522v4M642 519v3M643 515v4M644 512v3M645 508v4M646 505v3M647 501v4M648 497v4M649 494v3M650 490v4M651 486v4M652 482v4M653 478v4M654 474v4M655 470v4M656 466v4M657 462v4M658 458v4M659 454v4M660 450v4M661 446v4M662 441v5M663 437v4M664 433v4M665 428v5M666 424v4M667 420v4M668 415v5M669 411v4M670 407v4M671 402v5M672 398v4M673 393v5M674 389v4M675 384v5M676 380v4M677 375v5M678 371v4M679 366v5M680 362v4M681 357v5M682 353v4M683 348v5M684 344v4M685 339v5M686 335v4M687 330v5M688 326v4M689 321v5M690 317v4M691 312v5M692 308v4M693 303v5M694 299v4M695 294v5M696 290v4M697 286v4M698 281v5M699 277v4M700 273v4M701 268v5M702 264v4M703 260v4M704 256v4M705 251v5M706 247v4M707 243v4M708 239v4M709 235v4M710 231v4M711 227v4M712 223v4M713 219v4M714 216v3M715 212v4M716 208v4M717 204v4M718 201v3M719 197v4M720 194v3M721 190v4M722 187v3M723 183v4M724 180v3M725 177v3M726 174v3M727 170v4M728 167v3M729 164v3M730 161v3M731 158v3M732 156v2M733 153v3M734 150v3M735 147v3M736 145v2M737 142v3M738 140v2M739 137v3M740 135v2M741 133v2M742 131v2M743 128v3M744 126v2M745 124v2M747 121v2M748 119v2M749 117v2M750 115v2M751 114v2M752 112v2M753 111v2M755 108v2M756 107v2M757 106v2M758 105v2M759 104v2M760 103v2M763 101v2M767 99v2"/><path transform="translate(0 .5)" d="M66 99h3M70 100h2M72 101h2M74 102h1M76 103h1M77 104h1M78 105h1M79 106h1M80 107h1M83 111h1M87 117h1M225 595h1M228 599h1M229 600h1M230 601h1M231 602h1M234 604h1M235 605h2M237 606h3M241 607h3M245 606h3M248 605h2M250 604h1M253 602h1M254 601h1M255 600h1M259 595h1M263 589h1M404 107h1M405 106h1M406 105h1M407 104h1M408 103h1M410 102h1M411 101h1M413 100h2M416 99h6M422 100h2M425 101h1M427 102h1M428 103h1M429 104h1M433 108h1M434 109h1M440 118h1M571 585h1M578 596h1M585 603h1M586 604h1M588 605h1M590 606h3M593 607h4M597 606h3M600 605h2M602 604h1M604 603h1M605 602h1M606 601h1M607 600h1M608 599h1M609 598h1M610 597h1M616 588h1M746 123h1M754 110h1M761 103h1M762 102h1M764 101h1M765 100h2M768 99h3"/></g>
</g>
<g stroke="#000" stroke-width="0.1">
<text class="m" transform="translate(367.0 63) scale(0.77 1)">Forme d'onda, nu</text>
<text class="m" transform="translate(18.7 76) scale(0.77 1)">V(t)</text>
<text class="m" transform="translate(403.0 677) scale(0.77 1)">t (s)</text>
<text class="m" transform="translate(52.0 103) scale(0.77 1)"><tspan class="d" x="0.28">1</tspan></text>
<text class="m" transform="translate(40.0 154) scale(0.77 1)"><tspan class="d" x="0.28 9.88 15.87">0.8</tspan></text>
<text class="m" transform="translate(40.0 205) scale(0.77 1)"><tspan class="d" x="0.28 9.88 15.87">0.6</tspan></text>
<text class="m" transform="translate(40.0 255) scale(0.77 1)"><tspan class="d" x="0.28 9.88 15.87">0.4</tspan></text>
<text class="m" transform="translate(40.0 306) scale(0.77 1)"><tspan class="d" x="0.28 9.88 15.87">0.2</tspan></text>
<text class="m" transform="translate(52.0 357) scale(0.77 1)"><tspan class="d" x="0.28">0</tspan></text>
<text class="m" transform="translate(34.0 408) scale(0.77 1)"><tspan class="m" x="-0.00">-</tspan><tspan class="d" x="8.07 17.67 23.66">0.2</tspan></text>
<text class="m" transform="translate(34.0 458) scale(0.77 1)"><tspan class="m" x="-0.00">-</tspan><tspan class="d" x="8.07 17.67 23.66">0.4</tspan></text>
<text class="m" transform="translate(34.0 509) scale(0.77 1)"><tspan class="m" x="-0.00">-</tspan><tspan class="d" x="8.07 17.67 23.66">0.6</tspan></text>
<text class="m" transform="translate(34.0 560) scale(0.77 1)"><tspan class="m" x="-0.00">-</tspan><tspan class="d" x="8.07 17.67 23.66">0.8</tspan></text>
<text class="m" transform="translate(46.0 611) scale(0.77 1)"><tspan class="m" x="-0.00">-</tspan><tspan class="d" x="8.07">1</tspan></text>
<text class="m" transform="translate(63.0 637) scale(0.77 1)"><tspan class="d" x="0.28">0</tspan></text>
<text class="m" transform="translate(141.0 637) scale(0.77 1)"><tspan class="d" x="0.28 9.88 15.87 23.66 31.45 39.24">0.0005</tspan></text>
<text class="m" transform="translate(237.0 637) scale(0.77 1)"><tspan class="d" x="0.28 9.88 15.87 23.66 31.45">0.001</tspan></text>
<text class="m" transform="translate(327.0 637) scale(0.77 1)"><tspan class="d" x="0.28 9.88 15.87 23.66 31.45 39.24">0.0015</tspan></text>
<text class="m" transform="translate(423.0 637) scale(0.77 1)"><tspan class="d" x="0.28 9.88 15.87 23.66 31.45">0.002</tspan></text>
<text class="m" transform="translate(513.0 637) scale(0.77 1)"><tspan class="d" x="0.28 9.88 15.87 23.66 31.45 39.24">0.0025</tspan></text>
<text class="m" transform="translate(609.0 637) scale(0.77 1)"><tspan class="d" x="0.28 9.88 15.87 23.66 31.45">0.003</tspan></text>
<text class="m" transform="translate(699.0 637) scale(0.77 1)"><tspan class="d" x="0.28 9.88 15.87 23.66 31.45 39.24">0.0035</tspan></text>
<text class="m" transform="translate(673.0 123) scale(0.77 1)"><tspan class="m" x="-0.00">v</tspan><tspan class="d" x="8.07">0</tspan><tspan class="m" x="15.58 23.37 31.16 38.96">t(t)</tspan></text>
<text class="m" transform="translate(673.0 149) scale(0.77 1)">vct(t)</text>
<text class="m" transform="translate(673.0 176) scale(0.77 1)">vrt(t)</text>
<text class="m" transform="translate(661.0 202) scale(0.77 1)">voutt(t)</text>
</g>
</svg></body></html>
